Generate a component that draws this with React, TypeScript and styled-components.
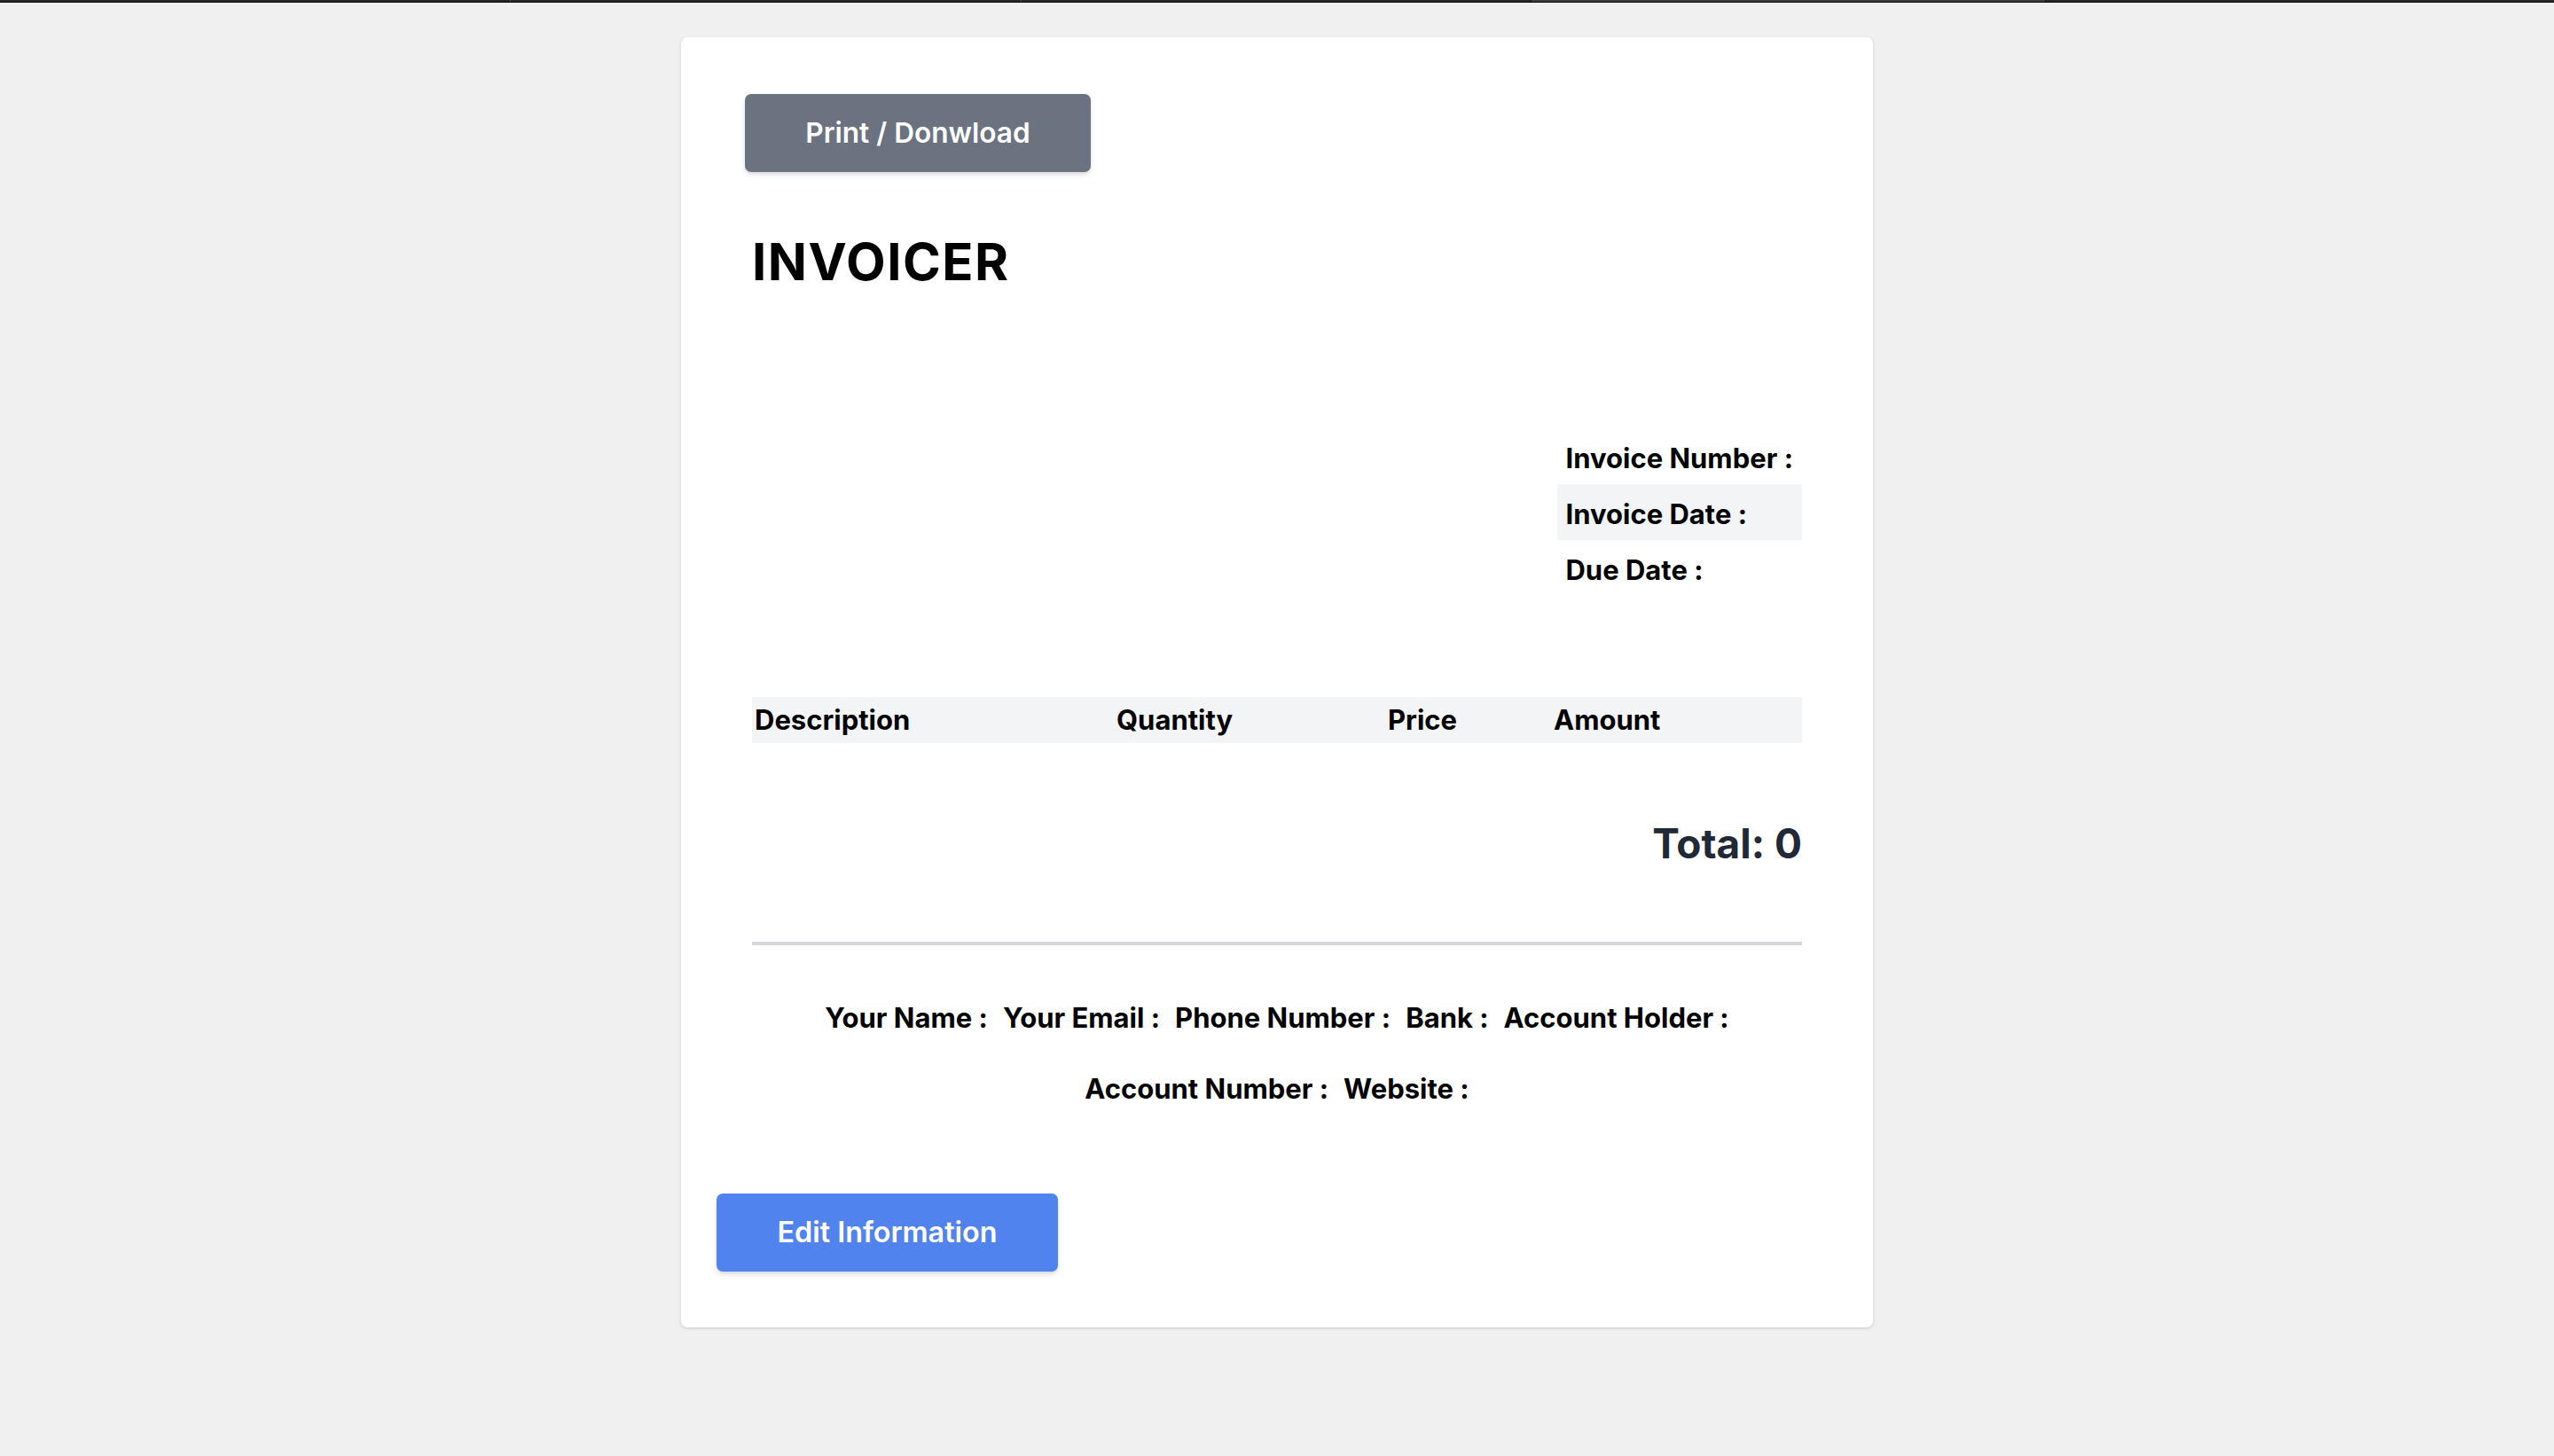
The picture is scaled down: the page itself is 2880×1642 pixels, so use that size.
import React from "react";
import styled, { createGlobalStyle } from "styled-components";

const GlobalStyle = createGlobalStyle`
  html, body {
    margin: 0;
    padding: 0;
    background: #f0f0f0;
  }
  body {
    font-family: Inter, "Noto Sans", "Liberation Sans", sans-serif;
    min-height: 100vh;
  }
  * { box-sizing: border-box; }
`;

const Page = styled.div`
  min-height: 1642px;
  background: #f0f0f0;
  display: flex;
  flex-direction: column;
  align-items: center;
`;

const TopStrip = styled.div`
  width: 100%;
  display: flex;
  height: 3px;
  border-bottom: 1px solid #0a0a0a;
`;

const StripTab = styled.div<{ $active?: boolean }>`
  flex: 1;
  height: 2px;
  background: ${(p) => (p.$active ? "#3c3c3c" : "#262626")};
  border-left: 1px solid #4a4a4a;
  &:first-child { border-left: none; }
`;

const Card = styled.main`
  width: 1344px;
  margin-top: 39px;
  background: #ffffff;
  border-radius: 7px;
  box-shadow: 0 1px 4px rgba(0, 0, 0, 0.12), 0 1px 2px rgba(0, 0, 0, 0.06);
  padding: 64px 40px 63px 40px;
  display: flex;
  flex-direction: column;
  align-items: flex-start;
`;

const ActionButton = styled.button<{ $variant: "gray" | "blue"; $width: number; $offset?: number }>`
  width: ${(p) => p.$width}px;
  height: 88px;
  padding: 0;
  margin-left: ${(p) => p.$offset ?? 0}px;
  border: none;
  border-radius: 7px;
  background: ${(p) => (p.$variant === "gray" ? "#6b7280" : "#5083ee")};
  color: #ffffff;
  font-family: Inter, "Noto Sans", sans-serif;
  font-weight: 600;
  font-size: ${(p) => (p.$variant === "gray" ? 31.6 : 32.3)}px;
  line-height: 1;
  text-align: center;
  cursor: pointer;
  box-shadow: 0 4px 6px -1px rgba(0, 0, 0, 0.12), 0 2px 4px -1px rgba(0, 0, 0, 0.07);
`;

const Sheet = styled.section`
  width: 100%;
  padding: 0 40px;
  display: flex;
  flex-direction: column;
`;

const Title = styled.h1`
  margin: 72px 0 0 0;
  font-size: 58px;
  line-height: 1;
  font-weight: 700;
  color: #000;
  letter-spacing: 1.5px;
`;

const InfoTable = styled.div`
  align-self: flex-end;
  margin-top: 159px;
  display: flex;
  flex-direction: column;
`;

const InfoRow = styled.div<{ $shaded?: boolean }>`
  height: 63px;
  line-height: 63px;
  padding: 2px 10px 0 9px;
  background: ${(p) => (p.$shaded ? "#f3f4f6" : "transparent")};
  font-size: 31px;
  font-weight: 700;
  color: #000;
  white-space: nowrap;
`;

const ItemsHeader = styled.div`
  margin-top: 114px;
  display: grid;
  grid-template-columns: 408px 306px 187px 1fr;
  height: 52px;
  background: #f3f4f6;
`;

const HeaderCell = styled.div`
  padding-left: 3px;
  font-size: 31px;
  font-weight: 700;
  line-height: 52px;
  color: #000;
`;

const Total = styled.div`
  margin-top: 88px;
  align-self: flex-end;
  font-size: 46px;
  line-height: 50px;
  font-weight: 700;
  color: #1f2937;
`;

const Divider = styled.hr`
  margin: 86px 0 0 0;
  width: 100%;
  height: 4px;
  border: none;
  background: #d4d5da;
`;

const Footer = styled.div`
  margin-top: 60px;
  display: flex;
  flex-wrap: wrap;
  justify-content: center;
  column-gap: 17px;
  row-gap: 36px;
`;

const FooterItem = styled.span`
  font-size: 31px;
  line-height: 44px;
  font-weight: 700;
  color: #000;
  white-space: nowrap;
`;

const EditWrap = styled.div`
  margin-top: 96px;
`;

const tabs = [false, false, false, true, false];
const columns = ["Description", "Quantity", "Price", "Amount"];
const footerLabels = [
  "Your Name :",
  "Your Email :",
  "Phone Number :",
  "Bank :",
  "Account Holder :",
  "Account Number :",
  "Website :",
];

export default function App() {
  return (
    <>
      <GlobalStyle />
      <Page>
        <TopStrip>
          {tabs.map((a, i) => (
            <StripTab key={i} $active={a} />
          ))}
        </TopStrip>
        <Card>
          <ActionButton $variant="gray" $width={390} $offset={32}>
            Print / Donwload
          </ActionButton>
          <Sheet>
            <Title>INVOICER</Title>
            <InfoTable>
              <InfoRow>Invoice Number :</InfoRow>
              <InfoRow $shaded>Invoice Date :</InfoRow>
              <InfoRow>Due Date :</InfoRow>
            </InfoTable>
            <ItemsHeader>
              {columns.map((c) => (
                <HeaderCell key={c}>{c}</HeaderCell>
              ))}
            </ItemsHeader>
            <Total>Total: 0</Total>
            <Divider />
            <Footer>
              {footerLabels.map((l) => (
                <FooterItem key={l}>{l}</FooterItem>
              ))}
            </Footer>
          </Sheet>
          <EditWrap>
            <ActionButton $variant="blue" $width={385}>
              Edit Information
            </ActionButton>
          </EditWrap>
        </Card>
      </Page>
    </>
  );
}
